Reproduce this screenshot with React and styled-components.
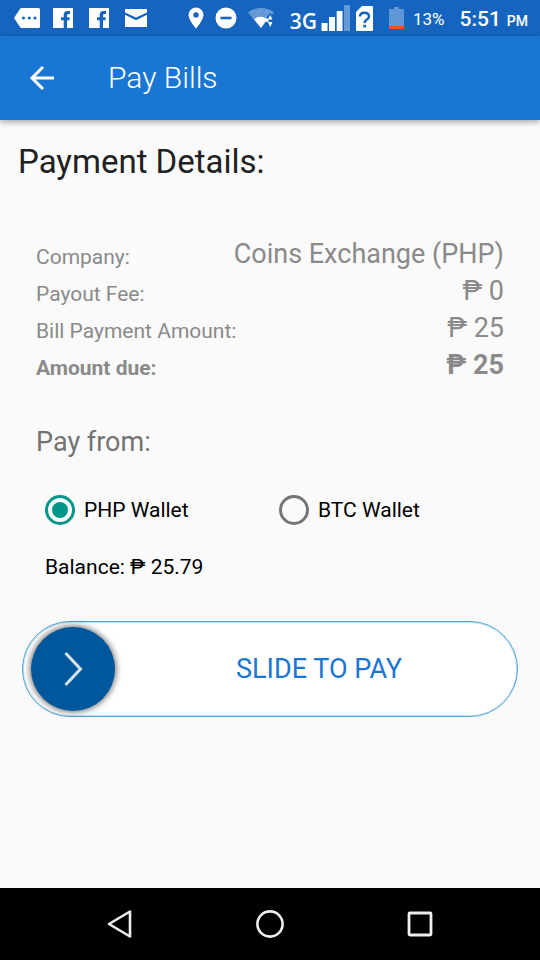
import React, { useState } from "react";
import styled, { createGlobalStyle } from "styled-components";

const Global = createGlobalStyle`
  *, *::before, *::after { box-sizing: border-box; }
  body { margin: 0; background: #fafafa; font-family: Roboto, "Liberation Sans", sans-serif; }
  button, input { font: inherit; }
`;

const Screen = styled.div`
  min-height: 100vh;
  display: flex;
  flex-direction: column;
  background: #fafafa;
`;

const StatusBar = styled.div`
  height: 36px;
  padding: 0 12px 0 14px;
  display: flex;
  justify-content: space-between;
  align-items: center;
  background: #1565c0;
  color: #fff;
`;

const StatusGroup = styled.div`
  display: flex;
  align-items: center;
  gap: ${(p) => p.$gap}px;
`;

const Glyph = styled.svg`
  display: block;
  flex: none;
`;

const StatusText = styled.span`
  padding-top: 2px;
  font-size: ${(p) => p.$size}px;
  font-weight: ${(p) => p.$weight || 400};
  line-height: 24px;
  white-space: nowrap;
`;

const Network = styled.span`
  display: flex;
  align-items: flex-end;
  gap: 4px;
  height: 26px;
`;

const NetworkText = styled.span`
  font: 600 21px/20px "Open Sans", sans-serif;
`;

const Clock = styled.time`
  display: flex;
  align-items: baseline;
  padding-top: 2px;
  gap: 6px;
`;

const AppBar = styled.header`
  height: 84px;
  padding: 0 24px;
  display: flex;
  align-items: center;
  gap: 48px;
  background: #1976d2;
  color: #fff;
  box-shadow: 0 2px 6px rgba(0, 0, 0, 0.35);
`;

const IconButton = styled.button`
  padding: 0;
  border: 0;
  background: none;
  color: inherit;
  cursor: pointer;
`;

const Title = styled.h1`
  margin: 0;
  font-size: 30px;
  font-weight: 300;
  line-height: 40px;
`;

const Content = styled.main`
  flex: 1;
  padding: 22px 18px 0;
`;

const Heading = styled.h2`
  margin: 0;
  font-size: 33px;
  font-weight: 400;
  line-height: 40px;
  color: #212121;
`;

const Details = styled.dl`
  margin: 54px 18px 0;
`;

const DetailRow = styled.div`
  display: flex;
  justify-content: space-between;
  align-items: flex-end;
  color: #8a8a8a;
  font-weight: ${(p) => (p.$strong ? 700 : 400)};
`;

const Label = styled.dt`
  font-size: 21px;
  line-height: 31px;
`;

const Value = styled.dd`
  margin: 0;
  font-size: 27px;
  line-height: 37px;
`;

const PayFrom = styled.fieldset`
  margin: 40px 18px 0;
  padding: 0;
  border: 0;
`;

const Legend = styled.legend`
  padding: 0;
  font-size: 27px;
  line-height: 36px;
  color: #737373;
`;

const Choices = styled.div`
  margin: 34px -9px 0 9px;
  display: grid;
  grid-template-columns: 1fr 1fr;
`;

const Choice = styled.label`
  display: flex;
  align-items: center;
  gap: 9px;
  font-size: 21px;
  line-height: 32px;
  color: #000;
  cursor: pointer;
`;

const Radio = styled.input`
  appearance: none;
  display: grid;
  place-items: center;
  width: 30px;
  height: 30px;
  margin: 0;
  flex: none;
  border: 3px solid #757575;
  border-radius: 50%;

  &:checked {
    border-color: #009688;
  }

  &:checked::before {
    content: "";
    width: 16px;
    height: 16px;
    border-radius: 50%;
    background: #009688;
  }
`;

const Balance = styled.p`
  margin: 27px 27px 0;
  font-size: 21px;
  line-height: 28px;
  color: #000;
`;

const Slider = styled.label`
  position: relative;
  display: flex;
  align-items: center;
  height: 96px;
  margin: 40px 4px 0;
  padding: 0 8px;
  border: 1px solid #4ba3d9;
  border-radius: 48px;
  background: #fff;
  box-shadow: inset 0 0 0 1px rgba(75, 163, 217, 0.3);
`;

const Thumb = styled.span`
  width: 84px;
  height: 84px;
  flex: none;
  display: grid;
  place-items: center;
  border-radius: 50%;
  background: #01579b;
  box-shadow: 0 0 6px 1px rgba(0, 0, 0, 0.6);
`;

const SliderText = styled.span`
  flex: 1;
  padding-left: 14px;
  text-align: center;
  font-size: 27px;
  line-height: 36px;
  color: #1976d2;
`;

const SliderInput = styled.input`
  position: absolute;
  inset: 0;
  width: 100%;
  height: 100%;
  margin: 0;
  opacity: 0;
  cursor: pointer;
`;

const NavBar = styled.nav`
  height: 72px;
  padding: 0 45px;
  display: grid;
  grid-template-columns: repeat(3, 1fr);
  align-items: center;
  justify-items: center;
  background: #000;
  color: #eee;
`;

function Icon({ w, h, children }) {
  return (
    <Glyph width={w} height={h} viewBox={`0 0 ${w} ${h}`} fill="currentColor" aria-hidden="true">
      {children}
    </Glyph>
  );
}

function MessageIcon() {
  return (
    <Icon w={26} h={20}>
      <path d="M7.5 0H24.5Q26 0 26 1.500V18.500Q26 20 24.500 20H7.500Q6.500 20 6 19L0 10L6 1Q6.500 0 7.500 0Z" />
      <g fill="#1565c0">
        <circle cx="9.500" cy="10" r="1.600" />
        <circle cx="15.300" cy="10" r="1.600" />
        <circle cx="21" cy="10" r="1.600" />
      </g>
    </Icon>
  );
}

function FacebookIcon() {
  return (
    <Icon w={20} h={20}>
      <path d="M0 0H20V20H14V12.300H16.600V9.200H14V7.600Q14 6 15.500 6H17V3H14.500Q10.700 3 10.700 7V9.200H8V12.300H10.700V20H0Z" />
    </Icon>
  );
}

function MailIcon() {
  return (
    <Icon w={22} h={18}>
      <path d="M0 0H22V3.500L11 8.600L0 3.500ZM0 5.800L11 11.200L22 5.800V18H0Z" />
    </Icon>
  );
}

function PinIcon() {
  return (
    <Icon w={16} h={22}>
      <path fillRule="evenodd" d="M8 0.500A7.500 7.500 0 0 0 0.500 8C0.500 13 8 21.500 8 21.500S15.500 13 15.500 8A7.500 7.500 0 0 0 8 0.500ZM8 5.200A2.700 2.700 0 1 1 8 10.600A2.700 2.700 0 0 1 8 5.200Z" />
    </Icon>
  );
}

function DoNotDisturbIcon() {
  return (
    <Icon w={22} h={22}>
      <circle cx="11" cy="11" r="10.500" />
      <path d="M5.500 9.700H16.500V12.300H5.500Z" fill="#1565c0" />
    </Icon>
  );
}

function WifiIcon() {
  return (
    <Icon w={26} h={22}>
      <path d="M0 5.500Q5.500 1 13 1T26 5.500L21 11H18V15L13 21Z" opacity="0.350" />
      <path d="M6 12.200Q12.500 7.500 19 12.200L13 21Z" />
      <path d="M19 14V9.500L22.200 6L25.500 9.500V21H20Z" fill="#1565c0" />
      <path d="M20 12.500L22.200 8L24.500 12.500ZM20 15H24.500L22.200 20Z" />
      <path d="M18 11.500H20.500V15H18Z" />
    </Icon>
  );
}

function SignalIcon() {
  return (
    <Icon w={30} h={26}>
      <path d="M0.500 18H6.500V26H0.500ZM8 12H14V26H8ZM15.700 6H21.500V26H15.700Z" />
      <path d="M23 0H29V26H23Z" opacity="0.350" />
    </Icon>
  );
}

function SimIcon() {
  return (
    <Icon w={17} h={25}>
      <path d="M6 0H16Q17 0 17 1V24Q17 25 16 25H1Q0 25 0 24V6Z" />
      <path d="M4 10.500Q4 6.800 8.500 6.800T13 10.500Q13 12 10.800 13.500Q8.700 15 8.700 17" fill="none" stroke="#1565c0" strokeWidth="2.400" />
      <path d="M7.300 18.800H10V21.500H7.300Z" fill="#1565c0" />
    </Icon>
  );
}

function BatteryIcon() {
  return (
    <Icon w={15} h={22}>
      <path d="M5 0H10V2H14Q15 2 15 3V19H0V3Q0 2 1 2H5Z" fill="#5f96d5" />
      <path d="M0 19H15V21Q15 22 14 22H1Q0 22 0 21Z" fill="#f4511e" />
    </Icon>
  );
}

const details = [
  { label: "Company:", value: "Coins Exchange (PHP)" },
  { label: "Payout Fee:", value: "₱ 0" },
  { label: "Bill Payment Amount:", value: "₱ 25" },
  { label: "Amount due:", value: "₱ 25", strong: true },
];

export default function App() {
  const [wallet, setWallet] = useState("PHP");
  const [progress, setProgress] = useState(0);

  return (
    <>
      <Global />
      <Screen>
        <StatusBar>
          <StatusGroup $gap={16}>
            <StatusGroup $gap={13}>
              <MessageIcon />
              <FacebookIcon />
            </StatusGroup>
            <FacebookIcon />
            <MailIcon />
          </StatusGroup>
          <StatusGroup $gap={15}>
            <StatusGroup $gap={16}>
              <StatusGroup $gap={11}>
                <PinIcon />
                <DoNotDisturbIcon />
                <WifiIcon />
              </StatusGroup>
              <StatusGroup $gap={5}>
                <Network>
                  <NetworkText>3G</NetworkText>
                  <SignalIcon />
                </Network>
                <SimIcon />
              </StatusGroup>
              <StatusGroup $gap={9}>
                <BatteryIcon />
                <StatusText $size={17}>13%</StatusText>
              </StatusGroup>
            </StatusGroup>
            <Clock>
              <StatusText $size={21} $weight={500}>5:51</StatusText>
              <StatusText $size={14} $weight={500}>PM</StatusText>
            </Clock>
          </StatusGroup>
        </StatusBar>

        <AppBar>
          <IconButton aria-label="Back">
            <Icon w={36} h={36}>
              <path d="M30 18H8M19 7L8 18L19 29" fill="none" stroke="currentColor" strokeWidth="3" />
            </Icon>
          </IconButton>
          <Title>Pay Bills</Title>
        </AppBar>

        <Content>
          <Heading>Payment Details:</Heading>
          <Details>
            {details.map((d) => (
              <DetailRow key={d.label} $strong={d.strong}>
                <Label>{d.label}</Label>
                <Value>{d.value}</Value>
              </DetailRow>
            ))}
          </Details>

          <PayFrom>
            <Legend>Pay from:</Legend>
            <Choices>
              {["PHP", "BTC"].map((name) => (
                <Choice key={name}>
                  <Radio
                    type="radio"
                    name="wallet"
                    value={name}
                    checked={wallet === name}
                    onChange={() => setWallet(name)}
                  />
                  {name} Wallet
                </Choice>
              ))}
            </Choices>
          </PayFrom>
          <Balance>Balance: ₱ 25.79</Balance>

          <Slider>
            <Thumb style={{ marginLeft: `${progress * 0.8}%` }}>
              <Icon w={20} h={36}>
                <path d="M2.500 2L17.500 18L2.500 34" fill="none" stroke="#d6e4f0" strokeWidth="3" />
              </Icon>
            </Thumb>
            <SliderText>SLIDE TO PAY</SliderText>
            <SliderInput
              type="range"
              min="0"
              max="100"
              value={progress}
              onChange={(e) => setProgress(Number(e.target.value))}
            />
          </Slider>
        </Content>

        <NavBar>
          <IconButton aria-label="Back">
            <Icon w={30} h={30}>
              <path d="M25 2.500V27.500L4 15Z" fill="none" stroke="currentColor" strokeWidth="2.600" strokeLinejoin="round" />
            </Icon>
          </IconButton>
          <IconButton aria-label="Home">
            <Icon w={30} h={30}>
              <circle cx="15" cy="15" r="12.600" fill="none" stroke="currentColor" strokeWidth="2.600" />
            </Icon>
          </IconButton>
          <IconButton aria-label="Recent apps">
            <Icon w={30} h={30}>
              <rect x="4" y="4" width="22" height="22" rx="1" fill="none" stroke="currentColor" strokeWidth="2.800" />
            </Icon>
          </IconButton>
        </NavBar>
      </Screen>
    </>
  );
}
